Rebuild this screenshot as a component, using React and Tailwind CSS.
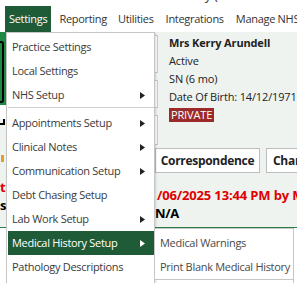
import React from "react";

const Arrow = ({ white }) => (
  <svg width="5" height="7" viewBox="0 0 5 7" className="shrink-0">
    <path d="M0 0 L5 3.5 L0 7 Z" fill={white ? "#ffffff" : "#222222"} />
  </svg>
);

const Item = ({ label, arrow, active }) => (
  <div
    className={
      "flex items-center justify-between h-[24px] pl-[4px] pr-[9px] " +
      (active ? "bg-[#1f5b36] text-white" : "text-[#3a3a3a]")
    }
  >
    <span>{label}</span>
    {arrow && <Arrow white={active} />}
  </div>
);

export default function App() {
  return (
    <div
      className="relative w-[297px] h-[283px] overflow-hidden bg-white text-[11px] tracking-[-0.3px]"
      style={{ fontFamily: "'Open Sans', 'Noto Sans', sans-serif" }}
    >
      {/* top cut-off strip */}
      <div className="h-[6px] overflow-hidden relative">
        <div className="absolute left-[180px] top-[-14px] text-[13px] text-[#333] whitespace-nowrap">
          Kerry (Ar
        </div>
      </div>

      {/* menu bar */}
      <div className="flex items-stretch h-[26px] text-[#333] whitespace-nowrap">
        <div className="ml-[5px] px-[4px] flex items-center bg-[#1f5b36] text-white">Settings</div>
        <div className="ml-[8px] flex items-center">Reporting</div>
        <div className="ml-[11px] flex items-center">Utilities</div>
        <div className="ml-[12px] flex items-center">Integrations</div>
        <div className="ml-[12px] flex items-center">Manage NHS</div>
      </div>

      {/* content */}
      <div className="h-[196px] bg-[#eef3ef] border-b border-[#2e7d46] flex">
        {/* left column (mostly hidden under the menu) */}
        <div className="w-[148px] shrink-0 flex flex-col">
          <div className="h-[73px] bg-[#1f8a46] flex items-end pb-[2px]">
            <div className="w-[4px] h-[62px] border-2 border-l-0 border-black rounded-r-[3px]" />
          </div>
          <div className="h-[14px] bg-white" />
          <div className="w-[5px] h-[6px] border-r-2 border-b-2 border-black" />
          <div className="h-[30px]" />
          <div className="w-[3px] h-[7px] bg-[#e89c2a] ml-[1px]" />
          <div className="h-[16px]" />
          <div className="text-[13px] font-bold text-[#e00000] leading-[18px]">t</div>
          <div className="text-[13px] font-bold text-black leading-[18px]">s</div>
        </div>

        {/* right column */}
        <div className="flex-1 flex flex-col">
          <div className="flex">
            <div className="w-[10px] flex flex-col gap-[7px] pt-[3px]">
              <div className="h-[38px] bg-white border border-[#c8c8c8]" />
              <div className="h-[28px] bg-white border border-[#c8c8c8]" />
              <div className="h-[30px] bg-white border border-[#c8c8c8]" />
            </div>
            <div className="pl-[11px] pt-[2px] text-[#222] leading-[18px] whitespace-nowrap tracking-[-0.15px]">
              <div className="font-bold">Mrs Kerry Arundell</div>
              <div>Active</div>
              <div>SN (6 mo)</div>
              <div>Date Of Birth: 14/12/1971</div>
              <div className="mt-[1px] inline-block bg-[#9b2b2b] text-white px-[2px] leading-[14px]">PRIVATE</div>
            </div>
          </div>
          <div className="flex gap-[6px] mt-[3px] pl-[7px] whitespace-nowrap">
            <div className="w-[105px] h-[25px] shrink-0 bg-white border border-[#bdbdbd] flex items-center justify-center font-bold text-[12px] text-[#222]">
              Correspondence
            </div>
            <div className="w-[60px] h-[25px] shrink-0 bg-white border border-[#bdbdbd] flex items-center pl-[6px] font-bold text-[12px] text-[#222]">
              Change
            </div>
          </div>
          <div className="mt-[13px] pl-[9px] text-[13px] font-bold text-[#e00000] leading-[18px] whitespace-nowrap tracking-[-0.15px]">
            /06/2025 13:44 PM by Mark
          </div>
          <div className="pl-[7px] text-[13px] font-bold text-black leading-[18px]">N/A</div>
        </div>
      </div>
      <div className="flex h-[55px]">
        <div className="flex-1" />
        <div className="w-[4px] border-l border-[#c8c8c8] bg-white" />
      </div>

      {/* Settings dropdown */}
      <div className="absolute left-[6px] top-[32px] w-[149px] h-[260px] bg-white border border-[#c6c6c6] pl-[1px] pt-[2px] shadow-[1px_1px_2px_rgba(0,0,0,0.15)] whitespace-nowrap">
        <Item label="Practice Settings" />
        <Item label="Local Settings" />
        <Item label="NHS Setup" arrow />
        <div className="h-[4px] flex items-start">
          <div className="w-full border-t border-[#d0d0d0]" />
        </div>
        <Item label="Appointments Setup" arrow />
        <Item label="Clinical Notes" arrow />
        <Item label="Communication Setup" arrow />
        <Item label="Debt Chasing Setup" />
        <Item label="Lab Work Setup" arrow />
        <Item label="Medical History Setup" arrow active />
        <Item label="Pathology Descriptions" />
      </div>

      {/* Submenu */}
      <div className="absolute left-[154px] top-[228px] w-[140px] h-[52px] bg-white border border-[#c6c6c6] pt-[2px] text-[#4a4a4a] whitespace-nowrap">
        <div className="h-[24px] flex items-center pl-[5px]">Medical Warnings</div>
        <div className="h-[24px] flex items-center pl-[5px]">Print Blank Medical History</div>
      </div>
    </div>
  );
}
